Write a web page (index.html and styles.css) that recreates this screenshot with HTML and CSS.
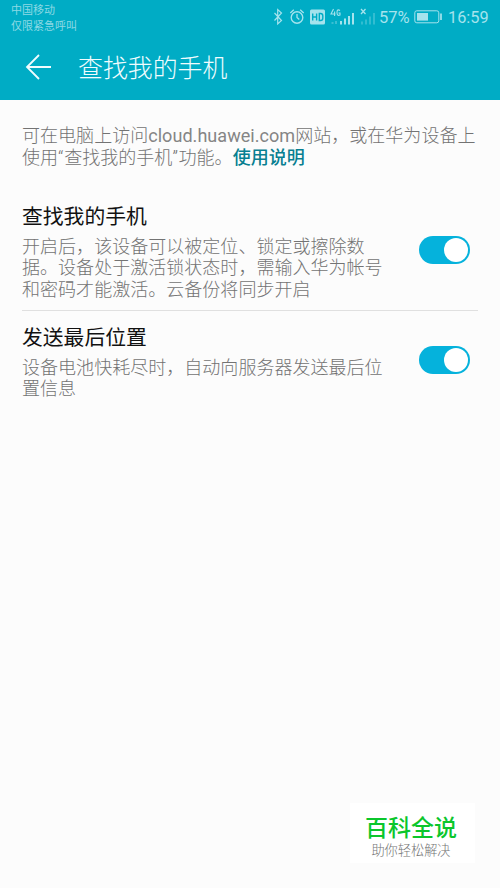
FILE: index.html
```html
<!DOCTYPE html>
<html lang="zh-CN">
<head>
<meta charset="utf-8">
<title>查找我的手机</title>
<link rel="stylesheet" href="styles.css">
</head>
<body>
<header class="header">
  <div class="status">
    <div class="carrier"><div>中国移动</div><div>仅限紧急呼叫</div></div>
    <div class="indicators">
      <svg class="icons" width="107" height="24" viewBox="0 0 107 24" fill="none" stroke="currentColor">
        <path d="M2.500 9l7 7.500-3.800 3.500V5.500l3.800 3.500-7 7.500" stroke-width="1.200"/>
        <circle cx="25" cy="13.500" r="5.800" stroke-width="1.400"/>
        <path d="M25 10v3.500l2.300 2M18.300 9l3.500-3.200M31.700 9l-3.500-3.200" stroke-width="1.300"/>
        <rect x="38" y="5.500" width="15" height="15" rx="1.500" fill="currentColor" stroke="none"/>
        <path d="M40.700 9.500v7M44.600 9.500v7M40.700 13h3.900M47.300 9.500v7h1.200q2.300 0 2.300-2.300v-2.400q0-2.300-2.300-2.300z" stroke="#00acc5" stroke-width="1.400"/>
        <path d="M61.500 5L59 10H63.500M62.600 7.500v4.500M68 6.500q-3-2-3 2 0 3.800 3 2.600V9h-1.500" stroke-width="1.100"/>
        <path d="M60.500 18v2M64 17v3" stroke-width="2" opacity=".35"/>
        <path d="M69 17v3.500M73 14.500v6M77 12v8.500M81 9v11.500" stroke-width="2"/>
        <path d="M89 5l4.500 5M93.500 5l-4.500 5" stroke-width="1.300"/>
        <path d="M90 17.500v3M94 15.500v5M98 12.500v8M102 9v11.500" stroke-width="2" opacity=".3"/>
      </svg>
      <span class="percent">57%</span>
      <svg class="battery" width="29" height="14" viewBox="0 0 29 14" fill="none" stroke="currentColor">
        <rect x=".8" y=".8" width="24" height="12" rx="2" stroke-width="1"/>
        <path d="M3 3h11v7.600H3z" fill="currentColor" stroke="none"/>
        <path d="M27 3.500v6.500" stroke-width="1.700"/>
      </svg>
      <span class="clock">16:59</span>
    </div>
  </div>
  <div class="bar">
    <svg class="back" width="27" height="26" viewBox="0 0 27 26" fill="none" stroke="currentColor" stroke-width="1.800"><path d="M26 13H2M14 1L2 13l12 12"/></svg>
    <h1>查找我的手机</h1>
  </div>
</header>
<main>
  <p class="intro">可在电脑上访问<span class="domain">cloud.huawei.com</span>网站，或在华为设备上<br>使用<span class="quote">“</span>查找我的手机<span class="quote">”</span>功能。<a>使用说明</a></p>
  <section class="row first">
    <div class="copy">
      <h2>查找我的手机</h2>
      <p>开启后，该设备可以被定位、锁定或擦除数<br>据。设备处于激活锁状态时，需输入华为帐号<br>和密码才能激活。云备份将同步开启</p>
    </div>
    <div class="toggle"></div>
  </section>
  <section class="row second">
    <div class="copy">
      <h2>发送最后位置</h2>
      <p>设备电池快耗尽时，自动向服务器发送最后位<br>置信息</p>
    </div>
    <div class="toggle"></div>
  </section>
</main>
<aside class="badge"><strong>百科全说</strong><span>助你轻松解决</span></aside>
</body>
</html>
```
FILE: styles.css
```css
* { box-sizing: border-box; }
body { margin: 0; height: 888px; background: #fcfcfc; overflow: hidden; font-family: Roboto, "Noto Sans CJK SC", sans-serif; white-space: nowrap; }
h1, h2, p { margin: 0; font-weight: 400; }
.header { height: 100px; background: #00acc5; color: #f0fcfe; }
.status { height: 36px; display: flex; justify-content: space-between; padding: 2px 11px 0 11px; color: #a5e3ed; }
.carrier { font-size: 11px; line-height: 15.500px; color: #8cd9e4; padding-top: 1px; }
.indicators { display: flex; align-items: flex-start; }
.icons { margin-top: 2px; }
.percent { font-size: 16.500px; line-height: 20px; margin-top: 6px; width: 35px; }
.battery { margin-top: 8px; }
.clock { font-size: 16.300px; line-height: 20px; margin: 6px 0 0 5px; width: 41px; }
.bar { display: flex; align-items: center; height: 62px; padding-left: 25px; }
.back { margin-right: 26px; }
h1 { font-size: 24.900px; font-weight: 300; line-height: 36px; padding-top: 4px; }
main { padding: 25px 22px 0; }
.intro, .copy p { font-size: 18.050px; line-height: 21.300px; color: #737373; font-weight: 300; }
.intro { height: 43px; line-height: 21.500px; }
.domain { font-weight: 400; color: #858585; letter-spacing: .03px; }
.quote { letter-spacing: .7px; }
.intro a { color: #087f91; font-weight: 500; }
.row { display: flex; justify-content: space-between; padding-right: 8px; }
.first { margin-top: 34px; height: 109px; border-bottom: 1px solid #e0e0e0; }
.first .toggle { margin-top: 34px; }
.second { padding-top: 12px; }
.second .toggle { margin-top: 23px; }
h2 { font-size: 20.800px; line-height: 30px; color: #111; }
.copy p { padding-top: 4px; }
.toggle { width: 51px; height: 28px; border-radius: 14px; background: #05b2dc; display: flex; justify-content: flex-end; padding: 2px; }
.toggle::after { content: ""; width: 24px; height: 24px; border-radius: 50%; background: #fff; }
.badge { position: absolute; left: 350px; top: 803px; width: 125px; height: 60px; background: #fff; display: flex; flex-direction: column; align-items: center; padding: 11px 3px 0 0; }
.badge strong { font-size: 23px; line-height: 29px; font-weight: 500; color: #0bc62c; }
.badge span { font-size: 13.200px; line-height: 16px; color: #757575; font-weight: 300; }
```
